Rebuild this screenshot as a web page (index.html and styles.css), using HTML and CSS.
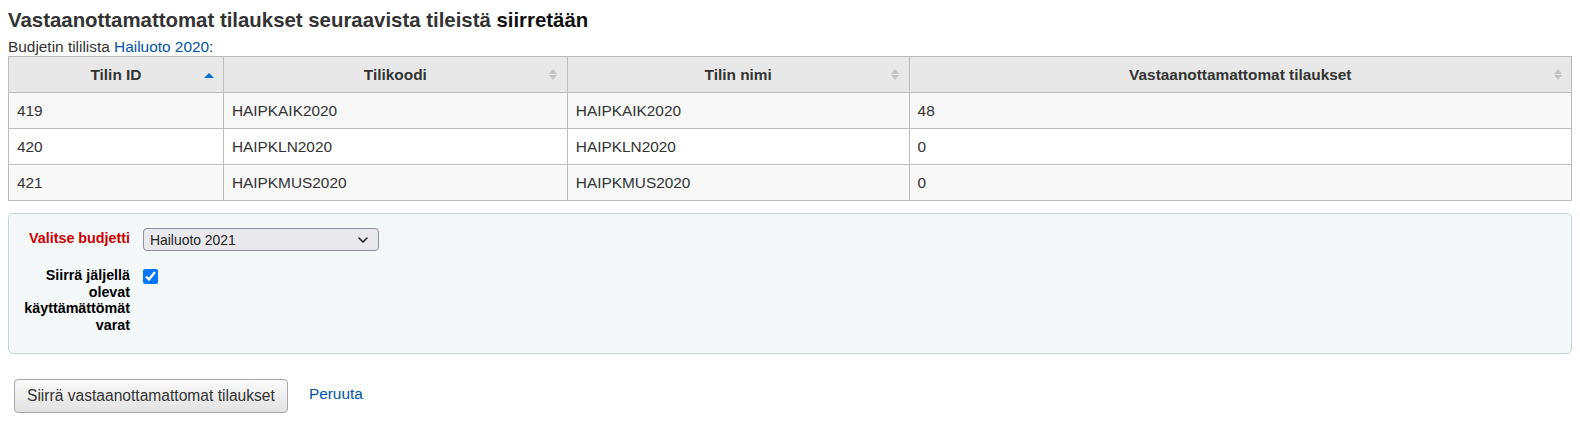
FILE: index.html
```html
<!DOCTYPE html>
<html lang="fi">
<head>
<meta charset="utf-8">
<title>Siirrä vastaanottamattomat tilaukset</title>
<link rel="stylesheet" href="styles.css">
</head>
<body>
<h3 class="title">Vastaanottamattomat tilaukset seuraavista tileistä <span class="title-end">siirretään</span></h3>
<p class="sub">Budjetin tililista <a href="#" class="link">Hailuoto 2020</a>:</p>
<table class="funds">
  <colgroup>
    <col class="c-id">
    <col class="c-code">
    <col class="c-name">
    <col class="c-orders">
  </colgroup>
  <thead>
    <tr>
      <th><span class="th-label">Tilin ID</span><span class="sort sort-asc"></span></th>
      <th><span class="th-label">Tilikoodi</span><span class="sort sort-both"><i class="up"></i><i class="down"></i></span></th>
      <th><span class="th-label">Tilin nimi</span><span class="sort sort-both"><i class="up"></i><i class="down"></i></span></th>
      <th><span class="th-label">Vastaanottamattomat tilaukset</span><span class="sort sort-both"><i class="up"></i><i class="down"></i></span></th>
    </tr>
  </thead>
  <tbody>
    <tr class="odd"><td>419</td><td>HAIPKAIK2020</td><td>HAIPKAIK2020</td><td>48</td></tr>
    <tr><td>420</td><td>HAIPKLN2020</td><td>HAIPKLN2020</td><td>0</td></tr>
    <tr class="odd"><td>421</td><td>HAIPKMUS2020</td><td>HAIPKMUS2020</td><td>0</td></tr>
  </tbody>
</table>

<div class="rows">
  <div class="row">
    <label class="lbl required" for="budget">Valitse budjetti</label>
    <div class="select-wrap">
      <select id="budget" class="select">
        <option>Hailuoto 2021</option>
      </select>
      <svg class="chev" width="12" height="8" viewBox="0 0 12 8"><path d="M2 2 L6 6 L10 2" fill="none" stroke="#222" stroke-width="1.6" stroke-linecap="round" stroke-linejoin="round"/></svg>
    </div>
  </div>
  <div class="row">
    <label class="lbl" for="move">Siirrä jäljellä olevat käyttämättömät varat</label>
    <input type="checkbox" id="move" class="check" checked>
  </div>
</div>

<div class="actions">
  <button type="button" class="btn">Siirrä vastaanottamattomat tilaukset</button>
  <a href="#" class="link cancel">Peruuta</a>
</div>
</body>
</html>
```
FILE: styles.css
```css
html, body {
  margin: 0;
  padding: 0;
  background: #fff;
}
body {
  margin: 8px;
  font-family: "Liberation Sans", Arial, sans-serif;
  font-size: 15.4px;
  color: #333;
}
.title {
  margin: 0 0 6px;
  font-size: 20.4px;
  line-height: 24px;
  font-weight: bold;
  color: #333;
}
.title-end {
  color: #111;
}
.sub {
  margin: 0;
  line-height: 18px;
  font-size: 15.4px;
  color: #333;
}
.link {
  color: #0054a8;
  text-decoration: none;
}
.funds {
  width: 100%;
  table-layout: fixed;
  border-collapse: collapse;
  border: 1px solid #bcbcbc;
}
.c-id { width: 13.75%; }
.c-code { width: 22%; }
.c-name { width: 21.87%; }
.c-orders { width: auto; }
.funds th,
.funds td {
  border: 1px solid #bcbcbc;
  line-height: 19px;
  padding: 8px 8px;
  font-size: 15.4px;
  color: #333;
}
.funds th {
  position: relative;
  background: #e8e8e8;
  font-weight: bold;
  text-align: center;
  padding-right: 24px;
  padding-left: 24px;
}
.funds td {
  text-align: left;
  background: #fff;
}
.funds tr.odd td {
  background: #f8f8f8;
}
.sort {
  position: absolute;
  right: 9px;
  top: 50%;
}
.sort-asc {
  width: 0;
  height: 0;
  margin-top: -2px;
  border-left: 5px solid transparent;
  border-right: 5px solid transparent;
  border-bottom: 5px solid #0a6fd0;
}
.sort-both {
  width: 9px;
  height: 11px;
  margin-top: -6px;
  display: flex;
  flex-direction: column;
  align-items: center;
  gap: 1px;
}
.sort-both .up {
  width: 0;
  height: 0;
  border-left: 4.5px solid transparent;
  border-right: 4.5px solid transparent;
  border-bottom: 5px solid #c4c4c4;
}
.sort-both .down {
  width: 0;
  height: 0;
  border-left: 4.5px solid transparent;
  border-right: 4.5px solid transparent;
  border-top: 5px solid #c4c4c4;
}

.rows {
  margin-top: 12px;
  border: 1px solid #bcdadb;
  border-radius: 5px;
  background: #f4f8f9;
  padding: 14px 4px 20px;
  display: flex;
  flex-direction: column;
  gap: 16px;
}
.row {
  display: grid;
  grid-template-columns: 117px auto;
  column-gap: 13px;
  align-items: start;
  justify-content: start;
}
.lbl {
  font-weight: bold;
  font-size: 14.3px;
  line-height: 16.5px;
  text-align: right;
  color: #000;
}
.row:first-child .lbl {
  padding-top: 2px;
}
.required {
  color: #cc0000;
}
.select-wrap {
  position: relative;
  width: 236px;
  height: 23px;
}
.select {
  appearance: none;
  -webkit-appearance: none;
  width: 236px;
  height: 23px;
  margin: 0;
  padding: 0 24px 0 6px;
  border: 1px solid #8f8f9d;
  border-radius: 4px;
  background: #e9e9ed;
  font-family: "Liberation Sans", Arial, sans-serif;
  font-size: 13.9px;
  color: #222;
}
.chev {
  position: absolute;
  right: 10px;
  top: 8px;
  pointer-events: none;
}
.check {
  width: 15px;
  height: 15px;
  margin: 2px 0 0;
}

.actions {
  margin-top: 25px;
  margin-left: 6px;
  display: flex;
  align-items: center;
  gap: 21px;
}
.btn {
  height: 34px;
  padding: 0 12px;
  border: 1px solid #a8a8a8;
  border-radius: 4px;
  background: linear-gradient(#fafafa, #e2e2e2);
  font-family: "Liberation Sans", Arial, sans-serif;
  font-size: 15.6px;
  color: #333;
}
.cancel {
  font-size: 15.4px;
  margin-bottom: 5px;
}
```
